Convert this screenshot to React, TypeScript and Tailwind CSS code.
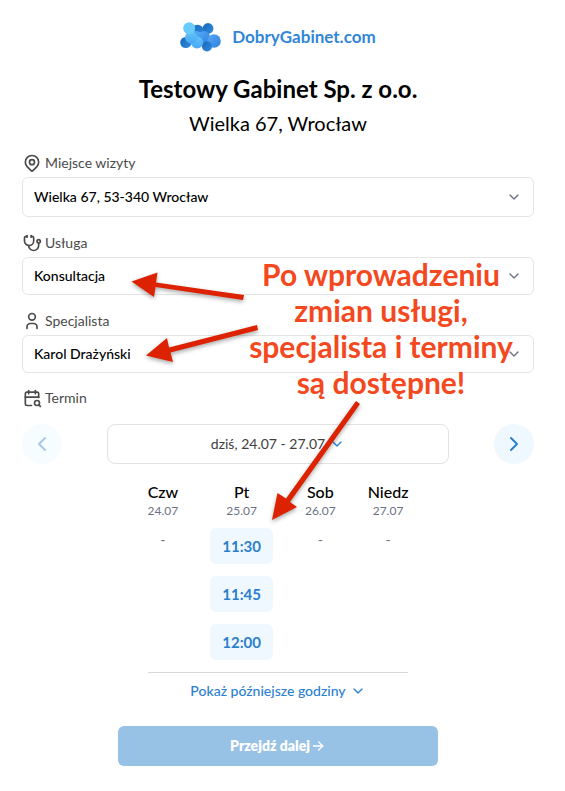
import React, { useState } from 'react';
import {
  TbArrowRight,
  TbCalendarSearch,
  TbChevronDown,
  TbChevronLeft,
  TbChevronRight,
  TbMapPin,
  TbStethoscope,
  TbUser,
} from 'react-icons/tb';

interface Day {
  name: string;
  date: string;
  slots: string[];
}

interface SelectFieldProps {
  id: string;
  label: string;
  icon: React.ReactNode;
  options: string[];
  className: string;
}

const DAYS: Day[] = [
  { name: 'Czw', date: '24.07', slots: [] },
  { name: 'Pt', date: '25.07', slots: ['11:30', '11:45', '12:00'] },
  { name: 'Sob', date: '26.07', slots: [] },
  { name: 'Niedz', date: '27.07', slots: [] },
];

const Logo: React.FC = () => (
  <svg className="w-[41px] h-[30px]" viewBox="0 0 41 30" aria-hidden="true">
    <defs>
      <linearGradient id="light" x1="0" y1="0" x2="0" y2="1">
        <stop offset="0" stopColor="#62c4f9" />
        <stop offset="1" stopColor="#4aa6f5" />
      </linearGradient>
      <linearGradient id="mid" x1="0" y1="0" x2="1" y2="1">
        <stop offset="0" stopColor="#55a9f5" />
        <stop offset="1" stopColor="#2f80e0" />
      </linearGradient>
      <linearGradient id="dark" x1="0" y1="0" x2="1" y2="1">
        <stop offset="0" stopColor="#1767b8" />
        <stop offset="1" stopColor="#2f8be0" />
      </linearGradient>
    </defs>
    <circle cx="17.5" cy="9" r="6.2" fill="url(#dark)" />
    <circle cx="28" cy="6.5" r="5.4" fill="url(#dark)" />
    <circle cx="5.8" cy="20.5" r="5.6" fill="url(#dark)" />
    <path d="M8 9h9l8 3 10 8-6 4H13l-6-6z" fill="#4da7f3" />
    <circle cx="24" cy="15" r="6" fill="url(#mid)" />
    <circle cx="34" cy="19" r="6.8" fill="url(#mid)" />
    <circle cx="27" cy="24.5" r="5" fill="url(#dark)" />
    <circle cx="17" cy="20.5" r="6" fill="url(#light)" />
    <circle cx="11" cy="15.500" r="6" fill="url(#light)" />
    <circle cx="9.2" cy="6.2" r="6" fill="#68cbfa" />
  </svg>
);

const SelectField: React.FC<SelectFieldProps> = ({ id, label, icon, options, className }) => (
  <div>
    <label htmlFor={id} className="flex items-center gap-[3px] h-5 text-sm text-[#4b4b4b]">
      {icon}
      {label}
    </label>
    <div className="relative mt-1">
      <select
        id={id}
        className={`block w-full appearance-none rounded-md border border-[#e5e5e5] bg-white pl-[11px] pr-9 text-sm font-medium text-black ${className}`}
      >
        {options.map((option) => (
          <option key={option}>{option}</option>
        ))}
      </select>
      <TbChevronDown className="pointer-events-none absolute inset-y-0 right-3 my-auto size-4 text-gray-500" />
    </div>
  </div>
);

// Red arrows and the note lying over the form
const Annotation: React.FC = () => (
  <div className="pointer-events-none absolute inset-0">
    <svg
      className="absolute left-0 top-0 h-[791px] w-[565px] drop-shadow-[0_2px_2px_rgba(0,0,0,0.35)]"
      viewBox="0 0 565 791"
      fill="#dc2200"
      aria-hidden="true"
    >
      <path d="M131.500 281.500 157.500 272.500 156 282.500 244 295 243 300 155.500 287 154 297Z" />
      <path d="M146 355.500 167 338 169 347.500 257 325 258 330 170.500 352.500 173 362Z" />
      <path d="M272 520 277.500 493 286 498.500 356 401 360 404 290 502 297 507Z" />
    </svg>
    <p className="absolute left-[231px] top-[256px] w-[300px] text-center text-[30px] leading-9 font-bold text-[#f4481e]">
      Po wprowadzeniu
      <br />
      zmian usługi,
      <br />
      specjalista i terminy
      <br />
      są dostępne!
    </p>
  </div>
);

const App: React.FC = () => {
  const [selected, setSelected] = useState<string | null>(null);

  return (
    <div className="relative min-h-screen bg-white font-['Lato',sans-serif] text-black">
      <main className="pl-[22px] pr-[31px] pt-[22px] pb-6">
        <header className="text-center">
          <a href="#" className="flex h-[30px] items-center justify-center gap-[11px] text-[17px] font-bold text-[#3186d8]">
            <Logo />
            DobryGabinet.com
          </a>
          <h1 className="mt-[21px] text-2xl leading-8 font-bold">Testowy Gabinet Sp. z o.o.</h1>
          <p className="mt-[2px] text-xl leading-8">Wielka 67, Wrocław</p>
        </header>

        <form className="mt-[14px]" onSubmit={(e) => e.preventDefault()}>
          <div className="flex flex-col gap-4">
            <SelectField
              id="place"
              label="Miejsce wizyty"
              icon={<TbMapPin className="size-5" strokeWidth={2} />}
              options={['Wielka 67, 53-340 Wrocław']}
              className="h-10"
            />
            <SelectField
              id="service"
              label="Usługa"
              icon={<TbStethoscope className="size-5" strokeWidth={2} />}
              options={['Konsultacja']}
              className="h-[38px]"
            />
            <SelectField
              id="specialist"
              label="Specjalista"
              icon={<TbUser className="size-5" strokeWidth={2} />}
              options={['Karol Drażyński']}
              className="h-[38px]"
            />
          </div>

          <h2 className="mt-[15px] flex items-center gap-[3px] h-5 text-sm text-[#4b4b4b]">
            <TbCalendarSearch className="size-5" strokeWidth={2} />
            Termin
          </h2>

          <div className="mt-4 flex items-center justify-between">
            <button
              type="button"
              disabled
              aria-label="Poprzednie dni"
              className="flex size-10 items-center justify-center rounded-full bg-[#f7fcff] text-[#a6c8ee]"
            >
              <TbChevronLeft className="size-6" />
            </button>
            <button
              type="button"
              className="flex h-10 w-2/3 items-center justify-center gap-1 rounded-lg border border-[#e2e2e2] text-sm text-[#404040]"
            >
              dziś, 24.07 - 27.07
              <TbChevronDown className="size-4 text-[#2b80d0]" />
            </button>
            <button
              type="button"
              aria-label="Następne dni"
              className="flex size-10 items-center justify-center rounded-full bg-[#f0f8ff] text-[#2b80d0]"
            >
              <TbChevronRight className="size-6" />
            </button>
          </div>

          <div className="mx-auto mt-4 w-fit">
            <div className="flex gap-8 border-b border-[#d9d9d9] pb-3">
              {DAYS.map((day) => (
                <div key={day.name} className="text-center">
                  <div className="text-base font-medium">{day.name}</div>
                  <div className="text-xs leading-[14px] text-gray-500">{day.date}</div>
                  {day.slots.length === 0 ? (
                    <div className="mt-3 text-sm text-gray-500">-</div>
                  ) : (
                    <div className="mt-[10px] flex flex-col gap-3">
                      {day.slots.map((slot) => (
                        <button
                          key={slot}
                          type="button"
                          aria-pressed={selected === slot}
                          onClick={() => setSelected(slot)}
                          className="h-9 rounded-md bg-[#f0f8ff] px-3 text-[15px] font-bold text-[#2b7fcb]"
                        >
                          {slot}
                        </button>
                      ))}
                    </div>
                  )}
                </div>
              ))}
            </div>
            <button
              type="button"
              className="mx-auto mt-2 flex items-center gap-1 text-sm font-medium text-[#2b80d0]"
            >
              Pokaż późniejsze godziny
              <TbChevronDown className="size-4" />
            </button>
          </div>

          <button
            type="submit"
            className="mx-auto mt-[25px] flex h-10 w-80 items-center justify-center rounded-md bg-[#97c1e5] text-sm font-extrabold text-white"
          >
            Przejdź dalej
            <TbArrowRight className="size-4" />
          </button>
        </form>
      </main>
      <Annotation />
    </div>
  );
};

export default App;
